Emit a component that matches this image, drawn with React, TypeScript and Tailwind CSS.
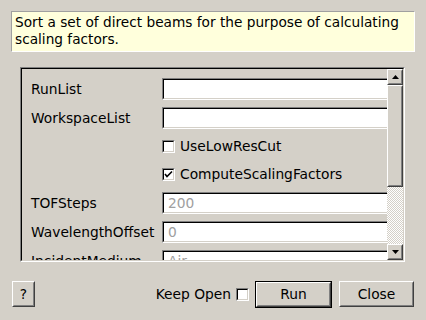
const sunkenOuter = "border border-t-[#808080] border-l-[#808080] border-r-white border-b-white";
const sunkenInner = "border border-t-black border-l-black border-r-[#d4d0c8] border-b-[#d4d0c8]";
const raised = "border border-t-white border-l-white border-r-[#404040] border-b-[#404040]";
const raisedInner = "border border-t-[#d4d0c8] border-l-[#d4d0c8] border-r-[#808080] border-b-[#808080]";

const Field = ({ label, value }: { label: string; value?: string }) => (
  <>
    <div className="h-[22px] flex items-center whitespace-nowrap">{label}</div>
    <div className={`h-[22px] w-[240px] ${sunkenOuter}`}>
      <div className={`h-full bg-white flex items-center pl-[4px] text-[#a0a0a0] ${sunkenInner}`}>
        {value}
      </div>
    </div>
  </>
);

const CheckBox = ({ checked }: { checked?: boolean }) => (
  <div className={`w-[13px] h-[13px] shrink-0 ${sunkenOuter}`}>
    <div className={`w-full h-full bg-white flex items-center justify-center ${sunkenInner}`}>
      {checked && (
        <svg width="9" height="9" viewBox="0 0 9 9">
          <path d="M1 4 L3 6.5 L8 1.5" stroke="black" strokeWidth="1.6" fill="none" />
        </svg>
      )}
    </div>
  </div>
);

const CheckRow = ({ label, checked }: { label: string; checked?: boolean }) => (
  <>
    <div className="h-[21px]" />
    <div className="h-[21px] flex items-center gap-[5px] whitespace-nowrap">
      <CheckBox checked={checked} />
      <span>{label}</span>
    </div>
  </>
);

const ArrowButton = ({ up }: { up?: boolean }) => (
  <div className={`h-[16px] w-[16px] ${raised}`}>
    <div className={`h-full flex items-center justify-center bg-[#d4d0c8] ${raisedInner}`}>
      <svg width="7" height="4" viewBox="0 0 7 4">
        <path d={up ? "M0 4 L3.5 0 L7 4 Z" : "M0 0 L3.5 4 L7 0 Z"} fill="black" />
      </svg>
    </div>
  </div>
);

export default function App() {
  return (
    <div className="w-[426px] h-[320px] bg-[#d4d0c8] flex flex-col text-[13.8px] text-black font-['DejaVu_Sans',sans-serif] overflow-hidden">
      {/* description */}
      <div className="mx-[11px] mt-[11px] h-[41px] border border-t-[#a0a0a0] border-l-[#a0a0a0] border-r-white border-b-white bg-[#ffffdc] pl-[3px] pt-[2px] leading-[17px] whitespace-nowrap text-[13.7px]">
        Sort a set of direct beams for the purpose of calculating
        <br />
        scaling factors.
      </div>

      {/* scroll area */}
      <div className="ml-[20px] mt-[15px] w-[385px] h-[195px] border border-t-[#808080] border-l-[#808080] border-r-white border-b-white">
        <div className="h-full flex border border-t-black border-l-black border-r-[#d4d0c8] border-b-[#d4d0c8]">
          <div className="flex-1 overflow-hidden pt-[9px] pl-[9px]">
            <div className="grid grid-cols-[131px_1fr] gap-y-[7px]">
              <Field label="RunList" />
              <Field label="WorkspaceList" />
              <CheckRow label="UseLowResCut" />
              <CheckRow label="ComputeScalingFactors" checked />
              <Field label="TOFSteps" value="200" />
              <Field label="WavelengthOffset" value="0" />
              <Field label="IncidentMedium" value="Air" />
            </div>
          </div>
          {/* scrollbar */}
          <div className="w-[16px] flex flex-col">
            <ArrowButton up />
            <div className={`h-[102px] ${raised}`}>
              <div className={`h-full bg-[#d4d0c8] ${raisedInner}`} />
            </div>
            <div className="flex-1 bg-[repeating-conic-gradient(#ffffff_0_25%,#d4d0c8_0_50%)] bg-[length:2px_2px]" />
            <ArrowButton />
          </div>
        </div>
      </div>

      {/* bottom buttons */}
      <div className="mt-[19px] h-[26px] flex items-center pl-[12px] pr-[12px]">
        <div className={`w-[23px] h-[26px] ${raised}`}>
          <div className={`h-full flex items-center justify-center ${raisedInner}`}>?</div>
        </div>
        <div className="flex-1" />
        <span className="whitespace-nowrap">Keep Open</span>
        <div className="ml-[5px] mr-[6px]">
          <CheckBox />
        </div>
        <div className="w-[77px] h-[27px] border border-black">
          <div className={`h-full ${raised}`}>
            <div className={`h-full flex items-center justify-center ${raisedInner}`}>Run</div>
          </div>
        </div>
        <div className={`ml-[7px] w-[75px] h-[26px] ${raised}`}>
          <div className={`h-full flex items-center justify-center ${raisedInner}`}>Close</div>
        </div>
      </div>
    </div>
  );
}
